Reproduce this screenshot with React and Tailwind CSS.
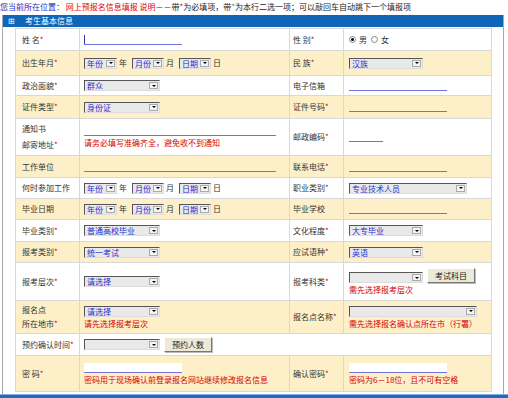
import React from 'react';

function Req() {
  return <span className="text-[#e00000]">*</span>;
}

function Sel({ children, className }) {
  return (
    <span className={`inline-flex h-[11px] items-stretch border border-t-[#555] border-l-[#555] border-r-[#ddd] border-b-[#ddd] bg-[#e9e9e9] align-middle ${className}`}>
      <span className="flex-1 overflow-hidden whitespace-nowrap pl-[2px] leading-[9px] text-[#1f2fd0]">{children}</span>
      <span className="my-[1px] mr-[1px] flex w-[9px] items-center justify-center border border-[#aaa] bg-[#f4f4f4]">
        <span className="border-x-[2px] border-t-[2px] border-x-transparent border-t-black" />
      </span>
    </span>
  );
}

function Line({ className }) {
  return <span className={`inline-block h-[9px] border-b border-[#7373d8] align-bottom ${className}`} />;
}

function DateSel() {
  return (
    <div className="flex items-center gap-[2px]">
      <Sel className="w-[33px]">年份</Sel>
      <span>年</span>
      <Sel className="ml-[3px] w-[32px]">月份</Sel>
      <span>月</span>
      <Sel className="ml-[3px] w-[32px]">日期</Sel>
      <span>日</span>
    </div>
  );
}

function Hint({ children }) {
  return <div className="mt-[2px] leading-[10px] text-[#d40000]">{children}</div>;
}

function Btn({ children }) {
  return (
    <span className="inline-flex h-[15px] items-center border border-t-[#fff] border-l-[#fff] border-r-[#777] border-b-[#777] bg-[#ece9d8] px-[7px] text-[#222] shadow-[1px_1px_0_#bbb]">
      {children}
    </span>
  );
}

export default function App() {
  const l1 = 'border border-[#d8d8d8] pl-[6px] align-middle';
  const v1 = 'border border-[#d8d8d8] pl-[4px] align-middle';
  const l2 = 'border border-[#d8d8d8] pl-[3px] align-middle';
  const v2 = 'border border-[#d8d8d8] pl-[5px] align-middle';
  const yel = 'bg-[#fdf0c8]';

  return (
    <div className="relative h-[398px] w-[508px] overflow-hidden bg-white font-['Noto_Sans_CJK_SC',sans-serif] text-[8px] leading-[10px] text-[#333]">
      {/* location line */}
      <div className="h-[14px] whitespace-nowrap pt-[2px] leading-[10px] text-[#222]">
        <span className="text-[#1a2bc4]">您当前所在位置：</span>
        <span className="text-[#e00000]"> 网上预报名信息填报 说明－－</span>
        带<span className="text-[#e00000]">*</span>为必填项，带<span className="text-[#22aa22]">*</span>为本行二选一项；可以敲回车自动跳下一个填报项
      </div>

      {/* panel */}
      <div className="ml-[2px] h-[379px] w-[502px] border-x border-[#a8a8a8]">
        <div className="mt-[1px] flex h-[12px] items-center bg-[#0f65b8] pl-[5px] text-white">
          <span className="mr-[10px] text-[8px]">⊞</span>
          <span>考生基本信息</span>
        </div>

        <table className="ml-[12px] mt-[1px] w-[476px] table-fixed border-collapse">
          <colgroup>
            <col className="w-[64px]" />
            <col className="w-[210px]" />
            <col className="w-[54px]" />
            <col className="w-[148px]" />
          </colgroup>
          <tbody>
            <tr className="h-[22px]">
              <td className={l1}>姓 名<Req /></td>
              <td className={v1}>
                <span className="inline-flex h-[11px] w-[98px] items-end border-b border-[#7373d8]">
                  <span className="h-[9px] w-[1px] bg-[#3333aa]" />
                </span>
              </td>
              <td className={l2}>性 别<Req /></td>
              <td className={v2}>
                <div className="flex items-center">
                  <span className="flex h-[7px] w-[7px] items-center justify-center rounded-full border border-[#888] bg-white">
                    <span className="h-[3px] w-[3px] rounded-full bg-black" />
                  </span>
                  <span className="ml-[3px]">男</span>
                  <span className="ml-[4px] h-[7px] w-[7px] rounded-full border border-[#888] bg-white" />
                  <span className="ml-[3px]">女</span>
                </div>
              </td>
            </tr>
            <tr className={`h-[25px] ${yel}`}>
              <td className={l1}>出生年月<Req /></td>
              <td className={v1}><DateSel /></td>
              <td className={l2}>民 族<Req /></td>
              <td className={v2}><Sel className="w-[74px]">汉族</Sel></td>
            </tr>
            <tr className="h-[20px]">
              <td className={l1}>政治面貌<Req /></td>
              <td className={v1}><Sel className="w-[76px]">群众</Sel></td>
              <td className={l2}>电子信箱</td>
              <td className={v2}><Line className="w-[98px]" /></td>
            </tr>
            <tr className={`h-[23px] ${yel}`}>
              <td className={l1}>证件类型<Req /></td>
              <td className={v1}><Sel className="w-[76px]">身份证</Sel></td>
              <td className={l2}>证件号码<Req /></td>
              <td className={v2}><Line className="w-[98px]" /></td>
            </tr>
            <tr className="h-[37px]">
              <td className={l1}>
                <div>通知书</div>
                <div className="mt-[6px]">邮寄地址<Req /></div>
              </td>
              <td className={v1}>
                <Line className="block w-[192px]" />
                <Hint>请务必填写准确齐全，避免收不到通知</Hint>
              </td>
              <td className={l2}>邮政编码<Req /></td>
              <td className={v2}><Line className="w-[34px]" /></td>
            </tr>
            <tr className={`h-[22px] ${yel}`}>
              <td className={l1}>工作单位</td>
              <td className={v1}><Line className="w-[192px]" /></td>
              <td className={l2}>联系电话<Req /></td>
              <td className={v2}><Line className="w-[98px]" /></td>
            </tr>
            <tr className="h-[21px]">
              <td className={l1}>何时参加工作</td>
              <td className={v1}><DateSel /></td>
              <td className={l2}>职业类别<Req /></td>
              <td className={v2}><Sel className="w-[118px]">专业技术人员</Sel></td>
            </tr>
            <tr className={`h-[21px] ${yel}`}>
              <td className={l1}>毕业日期</td>
              <td className={v1}><DateSel /></td>
              <td className={l2}>毕业学校</td>
              <td className={v2}><Line className="w-[98px]" /></td>
            </tr>
            <tr className="h-[22px]">
              <td className={l1}>毕业类别<Req /></td>
              <td className={v1}><Sel className="w-[76px]">普通高校毕业</Sel></td>
              <td className={l2}>文化程度<Req /></td>
              <td className={v2}><Sel className="w-[74px]">大专毕业</Sel></td>
            </tr>
            <tr className={`h-[21px] ${yel}`}>
              <td className={l1}>报考类别<Req /></td>
              <td className={v1}><Sel className="w-[76px]">统一考试</Sel></td>
              <td className={l2}>应试语种<Req /></td>
              <td className={v2}><Sel className="w-[74px]">英语</Sel></td>
            </tr>
            <tr className="h-[38px]">
              <td className={l1}>报考层次<Req /></td>
              <td className={v1}><Sel className="w-[76px]">请选择</Sel></td>
              <td className={l2}>报考科类<Req /></td>
              <td className={v2}>
                <div className="flex items-end gap-[4px]">
                  <Sel className="w-[74px]"> </Sel>
                  <Btn>考试科目</Btn>
                </div>
                <Hint>需先选择报考层次</Hint>
              </td>
            </tr>
            <tr className={`h-[33px] ${yel}`}>
              <td className={l1}>
                <div>报名点</div>
                <div className="mt-[4px]">所在地市<Req /></div>
              </td>
              <td className={v1}>
                <Sel className="w-[76px]">请选择</Sel>
                <Hint>请先选择报考层次</Hint>
              </td>
              <td className={l2}>报名点名称<Req /></td>
              <td className={v2}>
                <Sel className="w-[128px]"> </Sel>
                <Hint>需先选择报名确认点所在市（行署）</Hint>
              </td>
            </tr>
            <tr className="h-[22px]">
              <td className={l1}>预约确认时间<Req /></td>
              <td className={v1} colSpan={3}>
                <div className="flex items-center gap-[4px]">
                  <Sel className="w-[76px]"> </Sel>
                  <Btn>预约人数</Btn>
                </div>
              </td>
            </tr>
            <tr className={`h-[36px] ${yel}`}>
              <td className={l1}>密 码<Req /></td>
              <td className={v1}>
                <span className="block h-[10px] w-[98px] border-b border-[#7373d8] bg-white" />
                <Hint>密码用于现场确认前登录报名网站继续修改报名信息</Hint>
              </td>
              <td className={l2}>确认密码<Req /></td>
              <td className={v2}>
                <span className="block h-[10px] w-[98px] border-b border-[#7373d8] bg-white" />
                <Hint>密码为6－18位，且不可有空格</Hint>
              </td>
            </tr>
          </tbody>
        </table>
      </div>
      <div className="h-[5px] border-t border-[#7fb0e0] bg-[#1f6ac0]" />
    </div>
  );
}
